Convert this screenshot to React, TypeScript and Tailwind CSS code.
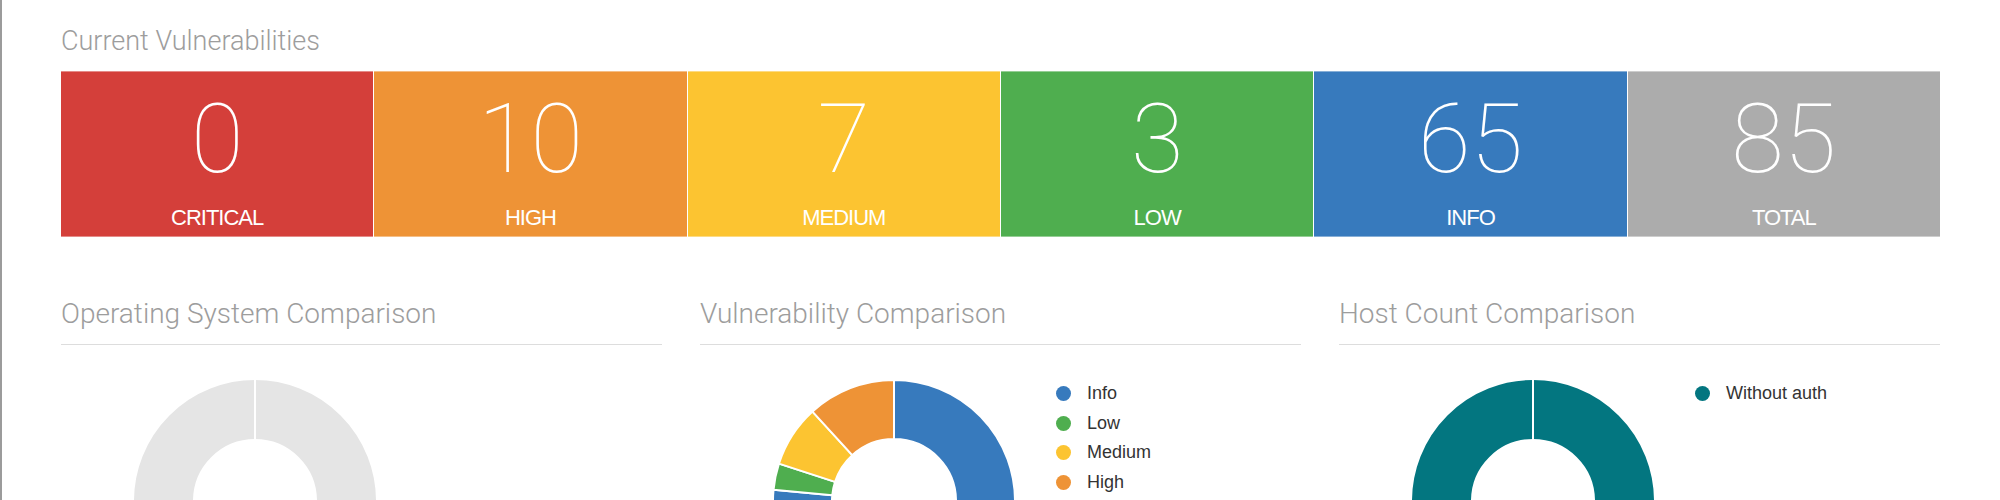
import React from "react";

type Box = { n: string; label: string; cls: string };

const boxes: Box[] = [
  { n: "0", label: "CRITICAL", cls: "bg-[#d43f3a]" },
  { n: "10", label: "HIGH", cls: "bg-[#ee9336]" },
  { n: "7", label: "MEDIUM", cls: "bg-[#fcc431]" },
  { n: "3", label: "LOW", cls: "bg-[#4fae4f]" },
  { n: "65", label: "INFO", cls: "bg-[#377abd]" },
  { n: "85", label: "TOTAL", cls: "bg-[#acacac]" },
];

const CX = 194;
const CY = 131;
const R1 = 121;
const R0 = 62;

function pt(r: number, a: number): [number, number] {
  const rad = (a * Math.PI) / 180;
  return [CX + r * Math.sin(rad), CY - r * Math.cos(rad)];
}

function arcPath(a0: number, a1: number) {
  const large = a1 - a0 > 180 ? 1 : 0;
  const [x0, y0] = pt(R1, a0);
  const [x1, y1] = pt(R1, a1);
  const [x2, y2] = pt(R0, a1);
  const [x3, y3] = pt(R0, a0);
  return `M${x0} ${y0} A${R1} ${R1} 0 ${large} 1 ${x1} ${y1} L${x2} ${y2} A${R0} ${R0} 0 ${large} 0 ${x3} ${y3} Z`;
}

function FullDonut({ color }: { color: string }) {
  return (
    <svg width="356" height="130" className="block shrink-0 overflow-visible">
      <circle cx={CX} cy={CY} r={(R0 + R1) / 2} fill="none" stroke={color} strokeWidth={R1 - R0} />
      <line x1={CX} y1={CY - R1 - 1} x2={CX} y2={CY - R0 + 1} stroke="#ffffff" strokeWidth="2" />
    </svg>
  );
}

function VulnDonut() {
  const data = [
    { v: 65, c: "#377abd" },
    { v: 3, c: "#4fae4f" },
    { v: 7, c: "#fcc431" },
    { v: 10, c: "#ee9336" },
  ];
  const total = 85;
  let acc = 0;
  return (
    <svg width="356" height="130" className="block shrink-0 overflow-visible">
      {data.map((d, i) => {
        const a0 = (acc / total) * 360;
        acc += d.v;
        const a1 = (acc / total) * 360;
        return <path key={i} d={arcPath(a0, a1)} fill={d.c} stroke="#ffffff" strokeWidth="2" strokeLinejoin="round" />;
      })}
    </svg>
  );
}

function LegendItem({ color, text }: { color: string; text: string }) {
  return (
    <div className="flex items-center gap-4 h-[29.5px]">
      <span className="block w-[15px] h-[15px] rounded-full" style={{ backgroundColor: color }} />
      <span className="text-[18px] leading-[29.5px] text-[#333333] font-['Liberation_Sans',Arial,sans-serif]">{text}</span>
    </div>
  );
}

function SectionTitle({ children }: { children: React.ReactNode }) {
  return (
    <h3 className="text-[28px] leading-[32px] font-light text-[#9d9d9d] font-['Roboto',sans-serif] pb-[14px] border-b border-[#dddddd]">
      {children}
    </h3>
  );
}

export default function App() {
  return (
    <div className="min-h-[500px] h-[500px] overflow-hidden bg-white border-l-2 border-[#9b9b9b] pl-[59px] pr-[60px] pt-[25px]">
      <h2 className="text-[27px] leading-[32px] font-light text-[#9d9d9d] font-['Roboto',sans-serif]">
        Current Vulnerabilities
      </h2>
      <div className="mt-[14px] grid grid-cols-6 gap-px">
        {boxes.map((b) => (
          <div key={b.label} className={`${b.cls} h-[166px] border-y border-white/40 flex flex-col items-center text-white`}>
            <div className="mt-[19px] text-[96px] leading-[96px] font-thin font-['Roboto',sans-serif]">{b.n}</div>
            <div className="mt-[18px] text-[22px] leading-[26px] tracking-[-1px] font-['Liberation_Sans',Arial,sans-serif]">
              {b.label}
            </div>
          </div>
        ))}
      </div>

      <div className="mt-[61px] grid grid-cols-3 gap-[38px]">
        <div>
          <SectionTitle>Operating System Comparison</SectionTitle>
          <div className="mt-[25px] flex">
            <FullDonut color="#e5e5e5" />
          </div>
        </div>
        <div>
          <SectionTitle>Vulnerability Comparison</SectionTitle>
          <div className="mt-[25px] flex">
            <VulnDonut />
            <div className="pt-[9px]">
              <LegendItem color="#377abd" text="Info" />
              <LegendItem color="#4fae4f" text="Low" />
              <LegendItem color="#fcc431" text="Medium" />
              <LegendItem color="#ee9336" text="High" />
            </div>
          </div>
        </div>
        <div>
          <SectionTitle>Host Count Comparison</SectionTitle>
          <div className="mt-[25px] flex">
            <FullDonut color="#037680" />
            <div className="pt-[9px]">
              <LegendItem color="#037680" text="Without auth" />
            </div>
          </div>
        </div>
      </div>
    </div>
  );
}
